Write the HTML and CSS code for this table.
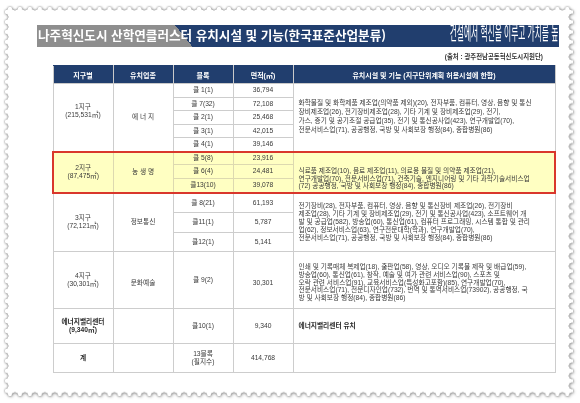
FILE: index.html
```html
<!DOCTYPE html>
<html lang="ko">
<head>
<meta charset="utf-8">
<title>나주혁신도시 산학연클러스터 유치시설 및 기능</title>
<link rel="stylesheet" href="styles.css">
</head>
<body>
<div class="frame">
  <div class="paper">
    <div class="content">
      <div class="title">
        <span class="title-text">나주혁신도시 산학연클러스터 유치시설 및 기능(한국표준산업분류)</span>
        <svg class="slogan" width="110" height="30" viewBox="0 0 320 30" preserveAspectRatio="none"><text x="2" y="22.5" textLength="316" lengthAdjust="spacingAndGlyphs">건설에서 혁신을 이루고 가치를 높</text></svg>
      </div>
      <div class="source">(출처 : 광주전남공동혁신도시지원단)</div>
      <table class="tbl">
        <colgroup>
          <col class="c60"><col class="c60"><col class="c60"><col class="c60"><col class="cdesc">
        </colgroup>
        <thead>
          <tr class="rh"><th>지구별</th><th>유치업종</th><th>블록</th><th>면적(㎡)</th><th>유치시설 및 기능 (지구단위계획 허용시설에 한함)</th></tr>
        </thead>
        <tbody>
          <tr class="r14">
            <td rowspan="5" class="lbl up">1지구<br>(215,531㎡)</td>
            <td rowspan="5">에 너 지</td>
            <td>클 1(1)</td><td>36,794</td>
            <td rowspan="5" class="desc d1">화학물질 및 화학제품 제조업(의약품 제외)(20), 전자부품, 컴퓨터, 영상, 음향 및 통신<br>장비제조업(26), 전기장비제조업(28), 기타 기계 및 장비제조업(29), 전기,<br>가스, 증기 및 공기조절 공급업(35), 전기 및 통신공사업(423), 연구개발업(70),<br>전문서비스업(71), 공공행정, 국방 및 사회보장 행정(84), 종합병원(86)</td>
          </tr>
          <tr class="r13"><td>클 7(32)</td><td>72,108</td></tr>
          <tr class="r14"><td>클 2(1)</td><td>25,468</td></tr>
          <tr class="r13"><td>클 3(1)</td><td>42,015</td></tr>
          <tr class="r14"><td>클 4(1)</td><td>39,146</td></tr>
          <tr class="r13 hl">
            <td rowspan="3" class="lbl rt rb rl">2지구<br>(87,475㎡)</td>
            <td rowspan="3" class="rt rb">농 생 명</td>
            <td class="rt">클 5(8)</td><td class="rt">23,916</td>
            <td rowspan="3" class="desc d2 rt rb rr">식료품 제조업(10), 음료 제조업(11), 의료용 물질 및 의약품 제조업(21),<br>연구개발업(70), 전문서비스업(71), 건축기술, 엔지니어링 및 기타 과학기술서비스업<br>(72) 공공행정, 국방 및 사회보장 행정(84), 종합병원(86)</td>
          </tr>
          <tr class="r14 hl"><td>클 6(4)</td><td>24,481</td></tr>
          <tr class="r14 hl"><td class="rb">클13(10)</td><td class="rb">39,078</td></tr>
          <tr class="r20">
            <td rowspan="3" class="lbl">3지구<br>(72,121㎡)</td>
            <td rowspan="3">정보통신</td>
            <td>클 8(21)</td><td>61,193</td>
            <td rowspan="3" class="desc">전기장비(28), 전자부품, 컴퓨터, 영상, 음향 및 통신장비 제조업(26), 전기장비<br>제조업(28), 기타 기계 및 장비제조업(29), 전기 및 통신공사업(423), 소프트웨어 개<br>발 및 공급업(582), 방송업(60), 통신업(61), 컴퓨터 프로그래밍, 시스템 통합 및 관리<br>업(62), 정보서비스업(63), 연구전문대학(학과), 연구개발업(70),<br>전문서비스업(71), 공공행정, 국방 및 사회보장 행정(84), 종합병원(86)</td>
          </tr>
          <tr class="r20"><td>클11(1)</td><td>5,787</td></tr>
          <tr class="r19"><td>클12(1)</td><td>5,141</td></tr>
          <tr class="r57">
            <td class="lbl">4지구<br>(30,301㎡)</td>
            <td class="low">문화예술</td>
            <td>클 9(2)</td><td class="low">30,301</td>
            <td class="desc d4">인쇄 및 기록매체 복제업(18), 출판업(58), 영상, 오디오 기록물 제작 및 배급업(59),<br>방송업(60), 통신업(61), 창작, 예술 및 여가 관련 서비스업(90), 스포츠 및<br>오락 관련 서비스업(91), 교육서비스업(특성화고포함)(85), 연구개발업(70),<br>전문서비스업(71), 전문디자인업(732), 번역 및 통역서비스업(73902), 공공행정, 국<br>방 및 사회보장 행정(84), 종합병원(86)</td>
          </tr>
          <tr class="r35">
            <td class="lbl strong">에너지밸리센터<br>(9,340㎡)</td>
            <td></td>
            <td>클10(1)</td><td>9,340</td>
            <td class="desc strong">에너지밸리센터 유치</td>
          </tr>
          <tr class="r29">
            <td class="lbl strong">계</td>
            <td></td>
            <td class="lbl">13블록<br>(필지수)</td><td>414,768</td>
            <td class="desc"></td>
          </tr>
        </tbody>
      </table>
    </div>
  </div>
</div>
</body>
</html>
```
FILE: styles.css
```css
* { box-sizing: border-box; }
html, body { margin: 0; padding: 0; background: #fff; }
body {
  width: 580px;
  height: 403px;
  overflow: hidden;
  font-family: "Noto Sans CJK KR", "Noto Sans", sans-serif;
}
.frame {
  margin: 7px 0 0 5px;
  width: 568px;
  height: 389px;
  filter: drop-shadow(0 0 1px rgba(0,0,0,.5)) drop-shadow(1px 1px 1.5px rgba(0,0,0,.22));
}
.paper {
  width: 100%;
  height: 100%;
  background: #fff;
  padding: 18px 0 0 32px;
  -webkit-mask:
    radial-gradient(circle 3.6px, #0000 95%, #000) -5px -5px / 10px 10px round,
    linear-gradient(#000 0 0) 50% 50% / calc(100% - 10px) calc(100% - 10px) no-repeat;
  mask:
    radial-gradient(circle 3.6px, #0000 95%, #000) -5px -5px / 10px 10px round,
    linear-gradient(#000 0 0) 50% 50% / calc(100% - 10px) calc(100% - 10px) no-repeat;
}
.content { width: 522px; }
.title {
  position: relative;
  width: 522px;
  height: 22px;
  background: linear-gradient(51deg, #8e8e8e 121px, #213e6e 121px);
  color: #fff;
  display: flex;
  align-items: center;
  padding-left: 1px;
}
.title-text {
  font-size: 12.6px;
  font-weight: 700;
  line-height: 16px;
  margin-top: -3px;
  white-space: nowrap;
}
.slogan {
  position: absolute;
  right: 0;
  top: -7px;
  display: block;
}
.slogan text {
  fill: #fff;
  font-family: "Noto Sans CJK KR", sans-serif;
  font-size: 19px;
  font-weight: 400;
}
.source {
  margin-top: 6px;
  height: 8px;
  font-family: "Liberation Sans", "Noto Sans CJK KR", sans-serif;
  font-size: 6.4px;
  line-height: 8px;
  font-weight: 700;
  color: #333;
  text-align: right;
  padding-right: 16px;
  white-space: nowrap;
}
.tbl {
  margin: 4px 0 0 15px;
  width: 502px;
  border-collapse: collapse;
  table-layout: fixed;
  font-family: "Liberation Sans", "Noto Sans CJK KR", sans-serif;
  font-size: 6.7px;
  color: #383838;
}
.c60 { width: 60px; }
.cdesc { width: 262px; }
.tbl th {
  background: #213e6e;
  color: #fff;
  font-weight: 700;
  font-size: 7px;
  border: 1px solid #c9c9c9;
  border-top-color: #213e6e;
  padding: 0;
  white-space: nowrap;
}
.tbl td {
  border: 1px solid #cdcdcd;
  padding: 0;
  text-align: center;
  vertical-align: middle;
  line-height: 8.5px;
  white-space: nowrap;
}
.tbl td.desc {
  text-align: left;
  padding-left: 5px;
  line-height: 7.9px;
}
.tbl td.d1 { line-height: 9px; padding-bottom: 2px; }
.tbl td.d2 { padding-top: 13px; }
.tbl td.d4 { padding-top: 5px; }
.tbl td.up { padding-bottom: 12px; }
.tbl td.low { padding-top: 6px; }
.strong { font-weight: 700; color: #2a2a2a; }
.rh { height: 18px; }
.r13 { height: 13px; }
.r14 { height: 14px; }
.r19 { height: 19px; }
.r20 { height: 20px; }
.r29 { height: 29px; }
.r35 { height: 35px; }
.r57 { height: 57px; }
.hl td { background: #ffffc2; border-color: #ddd9b0; }
.tbl td.rt { border-top: 2px solid #d9372c; }
.tbl td.rb { border-bottom: 2px solid #d9372c; }
.tbl td.rl { border-left: 2px solid #d9372c; }
.tbl td.rr { border-right: 2px solid #d9372c; }
```
